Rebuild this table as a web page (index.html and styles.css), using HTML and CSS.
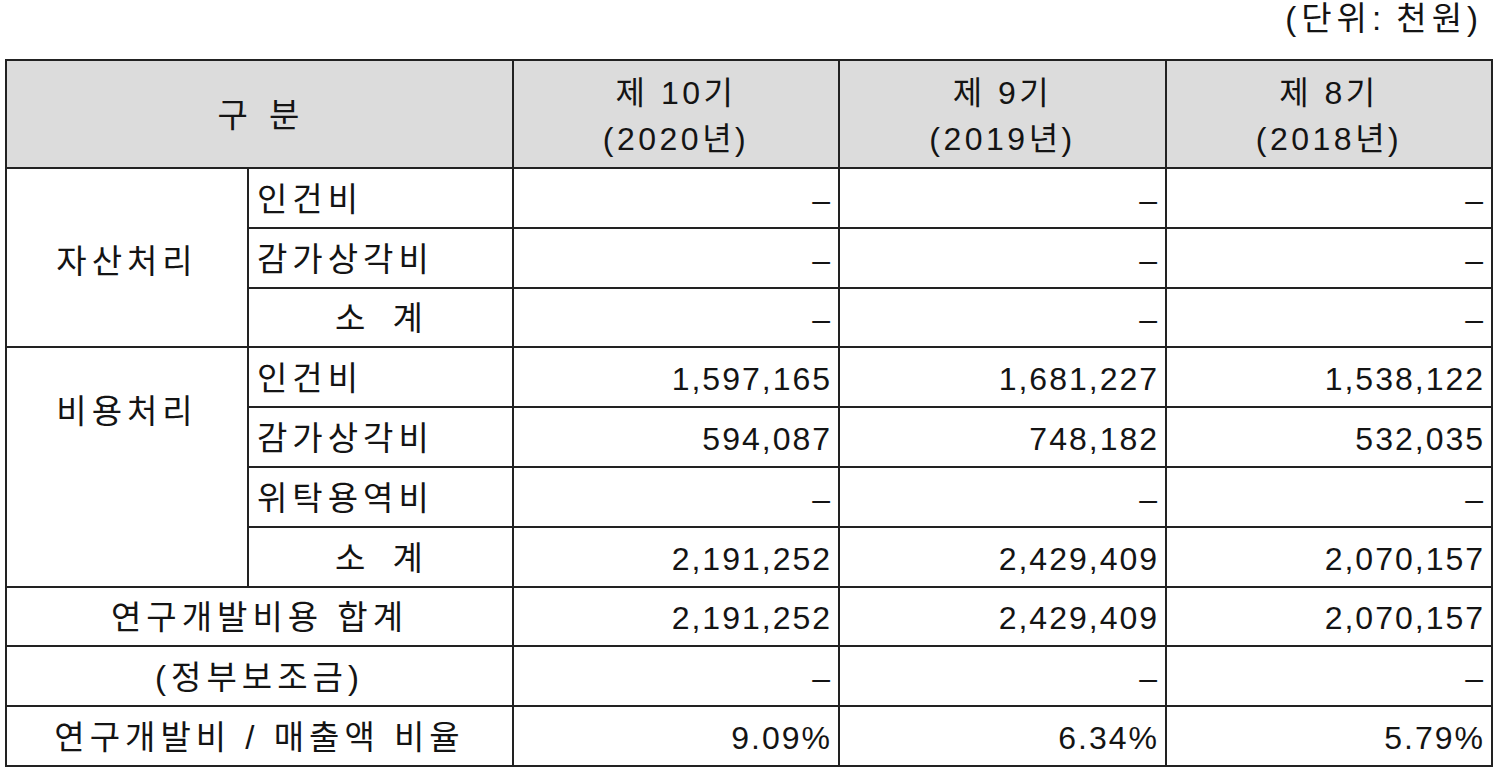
FILE: index.html
```html
<!DOCTYPE html>
<html lang="ko">
<head>
<meta charset="utf-8">
<link rel="stylesheet" href="styles.css">
</head>
<body>
<div class="page">
  <div class="unit">(단위: 천원)</div>
  <table class="rd">
    <colgroup>
      <col class="c1"><col class="c2"><col class="c3"><col class="c4"><col class="c5">
    </colgroup>
    <thead>
      <tr class="head">
        <th colspan="2" class="sp">구 분</th>
        <th>제 10기<br>(2020년)</th>
        <th>제 9기<br>(2019년)</th>
        <th>제 8기<br>(2018년)</th>
      </tr>
    </thead>
    <tbody>
      <tr><td rowspan="3" class="grp">자산처리</td><td class="lbl">인건비</td><td class="num">–</td><td class="num">–</td><td class="num">–</td></tr>
      <tr><td class="lbl">감가상각비</td><td class="num">–</td><td class="num">–</td><td class="num">–</td></tr>
      <tr><td class="lbl sub">소 계</td><td class="num">–</td><td class="num">–</td><td class="num">–</td></tr>
      <tr><td rowspan="4" class="grp grp-top">비용처리</td><td class="lbl">인건비</td><td class="num">1,597,165</td><td class="num">1,681,227</td><td class="num">1,538,122</td></tr>
      <tr><td class="lbl">감가상각비</td><td class="num">594,087</td><td class="num">748,182</td><td class="num">532,035</td></tr>
      <tr><td class="lbl">위탁용역비</td><td class="num">–</td><td class="num">–</td><td class="num">–</td></tr>
      <tr><td class="lbl sub">소 계</td><td class="num">2,191,252</td><td class="num">2,429,409</td><td class="num">2,070,157</td></tr>
      <tr><td colspan="2" class="mid">연구개발비용 합계</td><td class="num">2,191,252</td><td class="num">2,429,409</td><td class="num">2,070,157</td></tr>
      <tr><td colspan="2" class="mid">(정부보조금)</td><td class="num">–</td><td class="num">–</td><td class="num">–</td></tr>
      <tr><td colspan="2" class="mid">연구개발비 / 매출액 비율</td><td class="num">9.09%</td><td class="num">6.34%</td><td class="num">5.79%</td></tr>
    </tbody>
  </table>
</div>
</body>
</html>
```

FILE: styles.css
```css
html, body {
  margin: 0;
  padding: 0;
  background: #ffffff;
}
body {
  font-family: "Liberation Sans", "Noto Sans CJK KR", sans-serif;
  color: #141414;
  font-size: 32px;
  letter-spacing: 2px;
}
.page {
  padding: 0 5px;
  width: 1486px;
}
.unit {
  text-align: right;
  height: 40px;
  line-height: 38px;
  padding-right: 8px;
  margin-bottom: 19px;
  font-size: 33px;
  letter-spacing: 5px;
  word-spacing: -4px;
}
.rd {
  border-collapse: collapse;
  width: 1486px;
  table-layout: fixed;
}
.c1 { width: 242px; }
.c2 { width: 265px; }
.c3 { width: 326px; }
.c4 { width: 327px; }
.c5 { width: 326px; }
.rd th, .rd td {
  border: 2px solid #222;
  padding: 4px 6px 0;
  height: 53.8px;
  line-height: 40px;
  white-space: nowrap;
  font-weight: normal;
  vertical-align: middle;
}
.rd thead th {
  background: #dcdcdc;
  height: 102px;
  line-height: 46px;
  text-align: center;
  padding-top: 4px;
  letter-spacing: 3.5px;
}
.rd thead .sp {
  font-size: 33px;
  letter-spacing: 6px;
  padding-left: 10px;
}
.rd .grp {
  text-align: center;
  font-size: 33px;
  letter-spacing: 5px;
  padding-top: 8px;
}
.rd .grp-top {
  vertical-align: top;
  padding-top: 44px;
}
.rd .lbl {
  text-align: left;
  padding-left: 8px;
  font-size: 33px;
  letter-spacing: 5px;
}
.rd .sub {
  text-align: center;
  word-spacing: 8px;
}
.rd .mid {
  text-align: center;
  font-size: 33px;
  letter-spacing: 5px;
}
.rd .num {
  text-align: right;
  padding-right: 6px;
}
```
